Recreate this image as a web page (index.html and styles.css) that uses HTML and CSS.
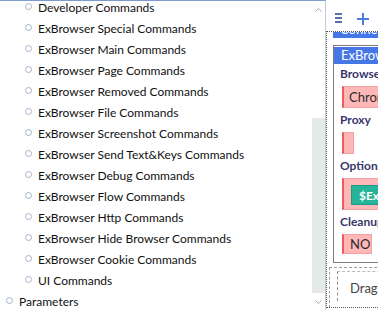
FILE: index.html
```html
<!DOCTYPE html>
<html>
<head>
<meta charset="utf-8">
<link rel="stylesheet" href="styles.css">
</head>
<body>
<div class="app">
  <div class="tree-pane">
    <ul class="tree">
      <li class="node lvl2"><span class="dot"></span>Developer Commands</li>
      <li class="node lvl2"><span class="dot"></span>ExBrowser Special Commands</li>
      <li class="node lvl2"><span class="dot"></span>ExBrowser Main Commands</li>
      <li class="node lvl2"><span class="dot"></span>ExBrowser Page Commands</li>
      <li class="node lvl2"><span class="dot"></span>ExBrowser Removed Commands</li>
      <li class="node lvl2"><span class="dot"></span>ExBrowser File Commands</li>
      <li class="node lvl2"><span class="dot"></span>ExBrowser Screenshot Commands</li>
      <li class="node lvl2"><span class="dot"></span>ExBrowser Send Text&amp;Keys Commands</li>
      <li class="node lvl2"><span class="dot"></span>ExBrowser Debug Commands</li>
      <li class="node lvl2"><span class="dot"></span>ExBrowser Flow Commands</li>
      <li class="node lvl2"><span class="dot"></span>ExBrowser Http Commands</li>
      <li class="node lvl2"><span class="dot"></span>ExBrowser Hide Browser Commands</li>
      <li class="node lvl2"><span class="dot"></span>ExBrowser Cookie Commands</li>
      <li class="node lvl2"><span class="dot"></span>UI Commands</li>
      <li class="node lvl1"><span class="dot"></span>Parameters</li>
    </ul>
    <div class="scrollbar">
      <div class="sb-btn sb-up">
        <svg width="7" height="4" viewBox="0 0 7 4"><path d="M0.5 3.5 L3.5 0.5 L6.5 3.5" fill="none" stroke="#a8a8a8" stroke-width="1"/></svg>
      </div>
      <div class="sb-track"><div class="sb-thumb"></div></div>
      <div class="sb-btn sb-down">
        <svg width="7" height="4" viewBox="0 0 7 4"><path d="M0.5 0.5 L3.5 3.5 L6.5 0.5" fill="none" stroke="#a8a8a8" stroke-width="1"/></svg>
      </div>
    </div>
  </div>
  <div class="side">
    <div class="toolbar">
      <svg class="ico-menu" width="7" height="10" viewBox="0 0 7 10"><rect x="0" y="0" width="7" height="2" fill="#5b6fa6"/><rect x="0" y="4" width="7" height="2" fill="#5b6fa6"/><rect x="0" y="8" width="7" height="2" fill="#5b6fa6"/></svg>
      <svg class="ico-plus" width="12" height="12" viewBox="0 0 12 12"><rect x="5" y="0" width="2" height="12" fill="#4a7fe0"/><rect x="0" y="5" width="12" height="2" fill="#4a7fe0"/></svg>
    </div>
    <div class="designer">
      <div class="canvas">
        <div class="prev-head"><span>Connection Commands</span></div>
        <div class="card">
          <div class="card-head">ExBrowser Main Commands</div>
          <div class="card-body">
            <div class="field">
              <div class="label">Browser</div>
              <div class="box box-text">Chrome</div>
            </div>
            <div class="field">
              <div class="label">Proxy</div>
              <div class="box box-empty"></div>
            </div>
            <div class="field">
              <div class="label">Options</div>
              <div class="box box-options"><span class="var-btn">$ExBrowserOptions</span></div>
            </div>
            <div class="field">
              <div class="label">Cleanup</div>
              <div class="box box-no">NO</div>
            </div>
          </div>
        </div>
        <div class="drop"><div class="drop-inner">Drag commands here</div></div>
      </div>
    </div>
  </div>
</div>
</body>
</html>
```
FILE: styles.css
```css
html, body {
  margin: 0;
  padding: 0;
  background: #ffffff;
}
body {
  width: 378px;
  height: 310px;
  overflow: hidden;
  font-family: Lato, "Liberation Sans", sans-serif;
  font-size: 12px;
  color: #111111;
}
.app {
  display: flex;
  width: 378px;
  height: 310px;
}
.tree-pane {
  width: 325px;
  height: 309px;
  border-top: 1px solid #7e98d2;
  border-right: 1px solid #c4cad6;
  display: flex;
  overflow: hidden;
}
.tree {
  list-style: none;
  margin: -4px 0 0 0;
  padding: 0;
  flex: 1;
}
.node {
  display: flex;
  align-items: flex-start;
  height: 21px;
  line-height: 21px;
  white-space: nowrap;
}
.lvl2 { padding-left: 25px; }
.lvl1 { padding-left: 6px; }
.dot {
  box-sizing: border-box;
  width: 7px;
  height: 7px;
  margin-top: 6px;
  margin-right: 6px;
  border: 1px solid #a6b4cc;
  border-radius: 50%;
  flex: none;
}
.scrollbar {
  width: 14px;
  display: flex;
  flex-direction: column;
}
.sb-btn {
  height: 17px;
  display: flex;
  justify-content: center;
  align-items: center;
}
.sb-down { height: 16px; }
.sb-track {
  flex: 1;
}
.sb-thumb {
  margin-top: 100px;
  margin-left: 1px;
  height: 175px;
  background: #e6e9ea;
}
.side {
  width: 52px;
  height: 310px;
  display: flex;
  flex-direction: column;
  overflow: hidden;
}
.toolbar {
  height: 31px;
  flex: none;
  display: flex;
  align-items: flex-start;
  padding: 13px 0 0 9px;
  box-sizing: border-box;
  gap: 15px;
}
.designer {
  flex: 1;
  margin-bottom: 2px;
  border-top: 1px dotted #555;
  border-left: 1px dotted #555;
  border-bottom: 1px dotted #555;
  overflow: hidden;
}
.canvas {
  width: 220px;
  padding-left: 6px;
}
.prev-head {
  height: 6px;
  overflow: hidden;
  background: #4677e6;
  color: #fff;
  font-size: 13px;
  line-height: 17px;
}
.prev-head span {
  display: block;
  margin-top: -11px;
  padding-left: 7px;
}
.card {
  margin-top: 7px;
  border: 1px solid #7c7c7c;
}
.card-head {
  margin-top: 1px;
  height: 17px;
  line-height: 17px;
  background: #4677e6;
  color: #fff;
  font-size: 13px;
  padding-left: 7px;
  white-space: nowrap;
}
.card-body {
  padding: 2px 0 8px 6px;
}
.field + .field {
  margin-top: 4px;
}
.label {
  height: 16px;
  line-height: 16px;
  font-weight: bold;
  font-size: 12px;
  color: #37376c;
  white-space: nowrap;
}
.box {
  box-sizing: border-box;
  margin-top: 4px;
  margin-left: 2px;
  background: #ffb8b8;
  border: 1px solid #f6a0a0;
  border-left: 2px solid #ee5a5a;
}
.box-text {
  height: 22px;
  line-height: 20px;
  padding-left: 5px;
  font-size: 13px;
  color: #2a2a2a;
  width: 120px;
}
.box-empty {
  height: 22px;
  width: 12px;
}
.box-options {
  height: 32px;
  width: 160px;
  padding: 6px 0 0 7px;
}
.var-btn {
  display: inline-block;
  height: 20px;
  line-height: 20px;
  padding: 0 7px;
  background: #27b39a;
  border: 1px solid #1c9a84;
  box-sizing: border-box;
  color: #fff;
  font-weight: bold;
  font-size: 12px;
  white-space: nowrap;
}
.box-no {
  height: 20px;
  width: 30px;
  line-height: 18px;
  padding-left: 6px;
  font-size: 13px;
  color: #2a2a2a;
}
.drop {
  margin: 4px 0 0 -4px;
  border: 1px dashed #9a9a9a;
  padding: 3px 0 0 7px;
  height: 36px;
}
.drop-inner {
  border-top: 1px dashed #b8b8b8;
  border-left: 1px dashed #8a8a8a;
  height: 30px;
  padding: 8px 0 0 12px;
  box-sizing: border-box;
  color: #444;
  font-size: 13px;
  white-space: nowrap;
}
```
